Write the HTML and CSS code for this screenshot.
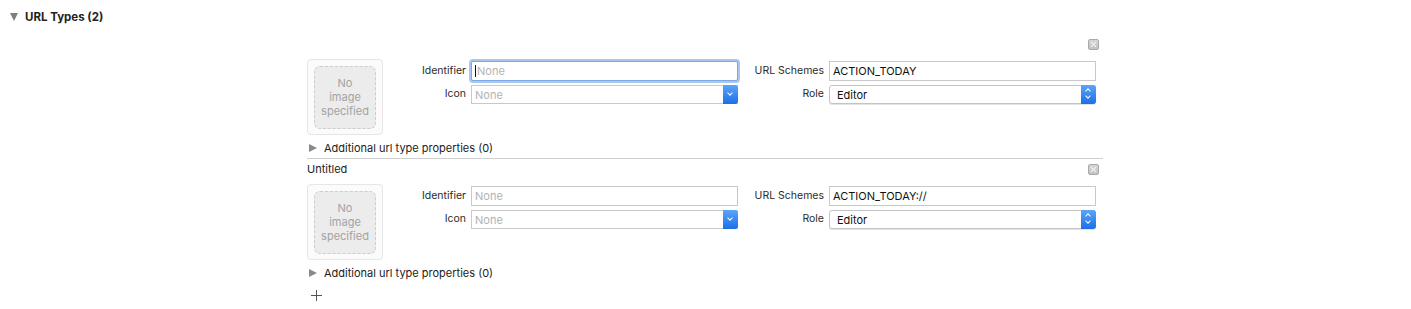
FILE: index.html
```html
<!DOCTYPE html>
<html lang="en">

<head>
    <meta charset="UTF-8">
    <title>URL Types</title>
    <link rel="stylesheet" href="styles.css">
</head>

<body>

    <div class="section-header">
        <span class="disclosure open"></span>
        <span class="section-title">URL Types (2)</span>
    </div>

    <div class="url-list">

        <div class="url-item first">
            <div class="item-head">
                <span class="item-name"></span>
                <span class="remove-button"></span>
            </div>
            <div class="item-body">
                <div class="image-well">
                    <div class="image-well-inner">No<br>image<br>specified</div>
                </div>
                <div class="form-grid">
                    <label class="field-label">Identifier</label>
                    <div class="text-field focused"><span class="caret"></span><span class="placeholder">None</span></div>
                    <label class="field-label">URL Schemes</label>
                    <div class="text-field"><span class="value">ACTION_TODAY</span></div>

                    <label class="field-label">Icon</label>
                    <div class="popup"><span class="placeholder">None</span><span class="popup-arrow pull-down"></span></div>
                    <label class="field-label">Role</label>
                    <div class="popup rounded"><span class="value">Editor</span><span class="popup-arrow stepper"></span></div>
                </div>
            </div>
            <div class="additional">
                <span class="disclosure closed"></span>
                <span>Additional url type properties (0)</span>
            </div>
        </div>

        <div class="url-item">
            <div class="item-head">
                <span class="item-name">Untitled</span>
                <span class="remove-button"></span>
            </div>
            <div class="item-body">
                <div class="image-well">
                    <div class="image-well-inner">No<br>image<br>specified</div>
                </div>
                <div class="form-grid">
                    <label class="field-label">Identifier</label>
                    <div class="text-field"><span class="placeholder">None</span></div>
                    <label class="field-label">URL Schemes</label>
                    <div class="text-field"><span class="value">ACTION_TODAY://</span></div>

                    <label class="field-label">Icon</label>
                    <div class="popup"><span class="placeholder">None</span><span class="popup-arrow pull-down"></span></div>
                    <label class="field-label">Role</label>
                    <div class="popup rounded"><span class="value">Editor</span><span class="popup-arrow stepper"></span></div>
                </div>
            </div>
            <div class="additional">
                <span class="disclosure closed"></span>
                <span>Additional url type properties (0)</span>
            </div>
        </div>

        <div class="add-button"></div>
    </div>

</body>

</html>
```

FILE: styles.css
```css
body {
    font-family: 'Inter', 'Liberation Sans', sans-serif;
    font-size: 11px;
    margin: 0;
    background-color: #ffffff;
    color: #262626;
    height: 309px;
    overflow: hidden;
}

.section-header {
    display: flex;
    align-items: center;
    height: 18px;
    padding: 8px 0 0 10px;
}

.section-title {
    font-weight: 700;
    font-size: 11.5px;
    color: #222;
    margin-left: 7px;
}

.disclosure {
    display: inline-block;
    width: 0;
    height: 0;
}

.disclosure.open {
    border-left: 4px solid transparent;
    border-right: 4px solid transparent;
    border-top: 8px solid #7f7f7f;
}

.disclosure.closed {
    border-top: 4px solid transparent;
    border-bottom: 4px solid transparent;
    border-left: 8px solid #8a8a8a;
    margin-right: 7px;
}

.url-list {
    margin: 8px 0 0 307px;
    width: 796px;
}

.url-item + .url-item {
    border-top: 1px solid #cfcfcf;
}

.item-head {
    display: flex;
    justify-content: space-between;
    align-items: center;
    height: 20px;
    padding-right: 4px;
}

.item-name {
    font-size: 11px;
    color: #222;
    margin-top: -1px;
}

.remove-button {
    position: relative;
    width: 9px;
    height: 9px;
    border: 1px solid #a9a9a9;
    border-radius: 2px;
    background: linear-gradient(#d6d6d6, #c2c2c2);
}

.remove-button::before,
.remove-button::after {
    content: "";
    position: absolute;
    left: 1px;
    top: 4px;
    width: 7px;
    height: 1px;
    background-color: #f4f4f4;
    transform: rotate(45deg);
}

.remove-button::after {
    transform: rotate(-45deg);
}

.item-body {
    display: flex;
    align-items: flex-start;
    margin-top: 5px;
}

.image-well {
    width: 74px;
    height: 74px;
    border: 1px solid #e6e6e6;
    border-radius: 4px;
    background-color: #fbfbfb;
    display: flex;
    align-items: center;
    justify-content: center;
    flex-shrink: 0;
}

.image-well-inner {
    width: 60px;
    height: 61px;
    border: 1px dashed #cdcdcd;
    border-radius: 6px;
    background-color: #ececec;
    color: #a3a3a3;
    font-size: 11px;
    line-height: 14px;
    text-align: center;
    display: flex;
    align-items: center;
    justify-content: center;
}

.form-grid {
    display: grid;
    grid-template-columns: 88px 267px 91px 267px;
    grid-auto-rows: 20px;
    row-gap: 3px;
    margin-top: 2px;
}

.field-label {
    text-align: right;
    padding-right: 5px;
    line-height: 20px;
    color: #2b2b2b;
    font-size: 10.5px;
}

.text-field {
    position: relative;
    border: 1px solid #c9c9c9;
    background-color: #fff;
    display: flex;
    align-items: center;
    padding-left: 3px;
    font-size: 11px;
}

.text-field.focused {
    border-color: #7aa7e6;
    box-shadow: 0 0 0 2px #a8c8f0;
    border-radius: 2px;
}

.caret {
    width: 1px;
    height: 12px;
    background-color: #111;
    margin-right: 1px;
}

.placeholder {
    color: #b3b3b3;
}

.value {
    color: #111;
}

.popup {
    position: relative;
    border: 1px solid #c9c9c9;
    background-color: #fff;
    display: flex;
    align-items: center;
    padding-left: 3px;
    height: 17px;
    margin-top: 1px;
    font-size: 11px;
}

.popup.rounded {
    border-radius: 3px;
    border-color: #c4c4c4;
    padding-left: 7px;
    box-shadow: 0 1px 0 #e3e3e3;
}

.popup-arrow {
    position: absolute;
    top: -1px;
    right: -1px;
    width: 15px;
    height: 19px;
    border-radius: 0 3px 3px 0;
    background: linear-gradient(#5aa5fb, #1b6fe6);
}

.popup-arrow.pull-down::after {
    content: "";
    position: absolute;
    left: 5px;
    top: 6px;
    width: 3px;
    height: 3px;
    border-right: 1.5px solid #fff;
    border-bottom: 1.5px solid #fff;
    transform: rotate(45deg);
}

.popup-arrow.stepper::before,
.popup-arrow.stepper::after {
    content: "";
    position: absolute;
    left: 5px;
    width: 3px;
    height: 3px;
    border-right: 1.5px solid #fff;
    border-bottom: 1.5px solid #fff;
}

.popup-arrow.stepper::before {
    top: 4px;
    transform: rotate(-135deg);
}

.popup-arrow.stepper::after {
    top: 9px;
    transform: rotate(45deg);
}

.additional {
    display: flex;
    align-items: center;
    height: 20px;
    margin-top: 3px;
    padding-left: 2px;
    color: #222;
    font-size: 11px;
}

.add-button {
    position: relative;
    width: 11px;
    height: 11px;
    margin: 7px 0 0 4px;
}

.add-button::before,
.add-button::after {
    content: "";
    position: absolute;
    background-color: #555;
}

.add-button::before {
    left: 5px;
    top: 0;
    width: 1px;
    height: 11px;
}

.add-button::after {
    left: 0;
    top: 5px;
    width: 11px;
    height: 1px;
}
```
